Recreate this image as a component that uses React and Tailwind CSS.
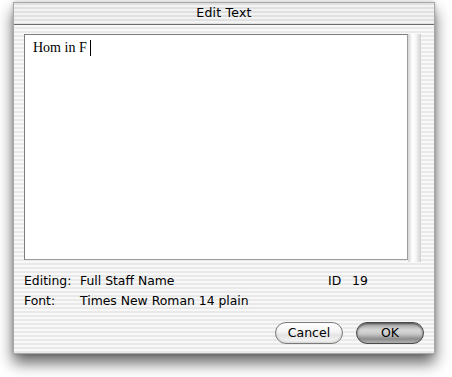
import React from 'react'

const stripes =
    'bg-[repeating-linear-gradient(180deg,#e9e9e9_0px,#e9e9e9_2px,#f8f8f8_2px,#f8f8f8_4px)]'

const AquaButton = ({label, primary}) => (
    <button
        className={`w-[68px] h-[22px] rounded-full border text-[12.5px] leading-none text-black ${
            primary
                ? 'border-[#4a4a4a] bg-[linear-gradient(180deg,#9a9a9a_0%,#d6d6d6_35%,#c8c8c8_55%,#8c8c8c_80%,#b4b4b4_100%)] shadow-[inset_0_1px_2px_rgba(0,0,0,0.5)]'
                : 'border-[#7a7a7a] bg-[linear-gradient(180deg,#ffffff_0%,#f4f4f4_45%,#e4e4e4_60%,#f6f6f6_100%)] shadow-[inset_0_-1px_2px_rgba(0,0,0,0.15)]'
        }`}
        style={{fontFamily: '"DejaVu Sans", "Lucida Grande", sans-serif'}}
    >
        {label}
    </button>
)

const App = () => {
    return (
        <div
            className="w-[452px] h-[377px] bg-white pl-[13px] pt-[2px] overflow-hidden"
            style={{fontFamily: '"DejaVu Sans", "Lucida Grande", sans-serif'}}
        >
            <div className={`w-[422px] h-[352px] flex flex-col border border-[#a8a8a8] shadow-[0_9px_14px_rgba(0,0,0,0.6),0_0_4px_rgba(0,0,0,0.2)] ${stripes}`}>
                {/* title bar */}
                <div className="h-[22px] flex items-center justify-center border-b border-[#6c6c6c] bg-[repeating-linear-gradient(180deg,#e0e0e0_0px,#e0e0e0_2px,#f3f3f3_2px,#f3f3f3_4px)]">
                    <span className="text-[12.5px] text-black tracking-[0.2px]">Edit Text</span>
                </div>

                {/* editor */}
                <div className="flex pl-[10px] pt-[9px]">
                    <div className="w-[384px] h-[226px] bg-white border border-[#7c7c7c] border-r-[#9c9c9c] border-b-[#9c9c9c] pl-[8px] pt-[2px]">
                        <div
                            className="flex items-center text-[14px] text-black"
                            style={{fontFamily: '"Liberation Serif", "Times New Roman", serif'}}
                        >
                            <span>Hom in F</span>
                            <span className="ml-[3px] w-px h-[16px] bg-black" />
                        </div>
                    </div>
                    <div className="w-[13px] h-[228px] bg-[linear-gradient(90deg,#d4d4d4_0%,#ffffff_35%,#f6f6f6_60%,#d0d0d0_100%)]" />
                </div>

                {/* info */}
                <div className="pl-[10px] pt-[9px] text-[12.4px] text-black">
                    <div className="flex h-[20px] items-center">
                        <span className="w-[56px]">Editing:</span>
                        <span className="w-[248px]">Full Staff Name</span>
                        <span className="w-[24px]">ID</span>
                        <span>19</span>
                    </div>
                    <div className="flex h-[20px] items-center">
                        <span className="w-[56px]">Font:</span>
                        <span>Times New Roman 14 plain</span>
                    </div>
                </div>

                {/* buttons */}
                <div className="flex justify-end gap-[13px] pr-[10px] mt-[11px]">
                    <AquaButton label="Cancel" />
                    <AquaButton label="OK" primary />
                </div>
            </div>
        </div>
    )
}

export default App
